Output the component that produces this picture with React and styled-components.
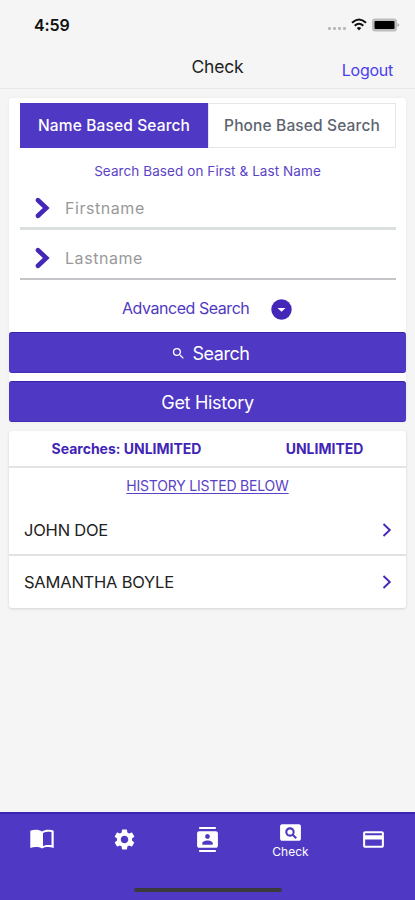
import React from "react";
import styled, { createGlobalStyle } from "styled-components";
import { MdContacts, MdCreditCard, MdPageview, MdSearch, MdSettings } from "react-icons/md";

const purple = "#4f38c3";
const ink = "#4527b8";

const GlobalStyle = createGlobalStyle`
  * {
    box-sizing: border-box;
  }

  body {
    background: #f5f5f5;
    font-family: Inter, "Liberation Sans", sans-serif;
    margin: 0;
  }

  button,
  input {
    font-family: inherit;
  }
`;

const Screen = styled.div`
  display: flex;
  flex-direction: column;
  height: 900px;
  overflow: hidden;
  width: 415px;
`;

const StatusBar = styled.div`
  align-items: center;
  display: flex;
  height: 50px;
  justify-content: space-between;
  padding: 0 15px 0 34px;
`;

const Clock = styled.span`
  color: #111;
  font-size: 16px;
  font-weight: 600;
  letter-spacing: -0.1px;
`;

const Header = styled.header`
  border-bottom: 1px solid #e8e8e8;
  display: grid;
  grid-template-columns: 1fr auto 1fr;
  height: 39px;
  padding: 0 22px 0 42px;
`;

const Title = styled.h1`
  color: #222;
  font-size: 17.5px;
  font-weight: 400;
  grid-column: 2;
  letter-spacing: -0.2px;
  line-height: 33px;
  margin: 0;
`;

const Logout = styled.a`
  color: #4b3df0;
  font-size: 16px;
  justify-self: end;
  letter-spacing: -0.25px;
  line-height: 40px;
`;

const Content = styled.main`
  display: flex;
  flex: 1;
  flex-direction: column;
  gap: 9px;
  padding: 9px 9px 0;
`;

const Card = styled.section`
  background: #fff;
  border-radius: 3px;
  box-shadow: 0 1px 3px rgba(0, 0, 0, 0.14);
`;

const SearchCard = styled(Card)`
  box-shadow: 0 0 3px rgba(0, 0, 0, 0.06);
  display: flex;
  flex-direction: column;
  height: 324px;
`;

const Segment = styled.div`
  display: grid;
  grid-template-columns: 188px 188px;
  margin: 5px 11px 0;
`;

const SegmentButton = styled.button`
  background: ${({ active }) => (active ? purple : "#fff")};
  border: 1px solid ${({ active }) => (active ? purple : "#e6e6e8")};
  color: ${({ active }) => (active ? "#fff" : "#5d6470")};
  font-size: 15.5px;
  font-weight: 500;
  height: 45px;
  letter-spacing: 0.14px;
  padding: 0;
  white-space: nowrap;
`;

const Caption = styled.p`
  color: #5a43c6;
  font-size: 13.5px;
  letter-spacing: 0.08px;
  line-height: 20px;
  margin: 13px 0 0;
  text-align: center;
`;

const Field = styled.label`
  align-items: center;
  border-bottom: ${({ line }) => line};
  display: flex;
  gap: 15px;
  height: 50px;
  margin: 0 10px 0 11px;
  padding: 8px 0 0 15px;
`;

const FirstField = styled(Field)`
  height: 49px;
`;

const Input = styled.input`
  background: none;
  border: 0;
  flex: 1;
  font-size: 16px;
  letter-spacing: 0.55px;
  outline: 0;
  padding: 0;

  &::placeholder {
    color: #999;
    opacity: 1;
  }
`;

const Advanced = styled.div`
  align-items: center;
  color: #5039c2;
  display: flex;
  flex: 1;
  font-size: 16px;
  gap: 22px;
  letter-spacing: -0.45px;
  padding: 7px 0 0 113px;
`;

const AdvancedLabel = styled.span`
  padding-bottom: 3px;
`;

const Buttons = styled.div`
  display: flex;
  flex-direction: column;
  gap: 8px;
`;

const Button = styled.button`
  align-items: center;
  background: ${purple};
  border: 0;
  border-bottom: 1px solid #452bb6;
  border-radius: 3px;
  border-top: 1px solid #3c20ac;
  color: #fff;
  display: flex;
  font-size: 18px;
  gap: 6px;
  height: 41px;
  justify-content: center;
  letter-spacing: -0.3px;
  padding: 1px 0 0;
`;

const SearchButton = styled(Button)`
  letter-spacing: -0.45px;
  padding-left: 6px;
`;

const Quota = styled.div`
  border-bottom: 2px solid #e4e4e4;
  color: #4125b6;
  display: grid;
  font-size: 14px;
  font-weight: 700;
  grid-template-columns: 235px 1fr;
  height: 37px;
  line-height: 36px;
  padding-right: 1px;
  text-align: center;
`;

const ListTitle = styled.h2`
  color: #5942c7;
  font-size: 14px;
  font-weight: 400;
  letter-spacing: -0.2px;
  line-height: 35px;
  margin: 0;
  text-align: center;
  text-decoration: underline;
  text-decoration-thickness: 1px;
  text-underline-offset: 2px;
`;

const Person = styled.div`
  align-items: center;
  color: #222;
  display: flex;
  font-size: 16.5px;
  height: 51px;
  justify-content: space-between;
  letter-spacing: -0.22px;
  padding: 2px 14px 0 15px;

  & + & {
    border-top: 2px solid #e2e2e2;
    height: 54px;
    padding-top: 0;
  }
`;

const TabBar = styled.nav`
  background: ${purple};
  border-top: 2px solid #3d24ad;
  display: flex;
  flex-direction: column;
  height: 88px;
  justify-content: space-between;
`;

const Tabs = styled.div`
  display: grid;
  grid-template-columns: repeat(5, 83px);
  height: 50px;
`;

const Tab = styled.a`
  align-items: center;
  color: #fff;
  display: flex;
  flex-direction: column;
  font-size: 12px;
  justify-content: center;
  line-height: 14px;
`;

const HomeIndicator = styled.div`
  align-self: center;
  background: #3a393c;
  border-radius: 3px;
  height: 4px;
  margin-bottom: 8px;
  width: 148px;
`;

function StatusIcons() {
  return (
    <svg width="74" height="16" viewBox="0 0 74 16">
      <g fill="#b9b9b9">
        <rect x="2" y="10" width="3" height="3" rx="1" />
        <rect x="7" y="10" width="3" height="3" rx="1" />
        <rect x="12" y="10" width="3" height="3" rx="1" />
        <rect x="17" y="10" width="3" height="3" rx="1" />
      </g>
      <g fill="none" stroke="#111" strokeWidth="2.1">
        <path d="M26 5.8Q33 -0.8 40 5.8" />
        <path d="M28.7 8.7Q33 4.8 37.3 8.7" />
      </g>
      <path d="M30.7 11Q33 9 35.3 11L33 13.5Z" fill="#111" />
      <rect x="46" y="1.5" width="25" height="13" rx="3" fill="#bdbdbd" />
      <rect x="48.5" y="4" width="20" height="8" rx="1" fill="#000" />
      <path d="M71.5 6Q75 8 71.5 10Z" fill="#aaa" />
    </svg>
  );
}

function FieldArrow() {
  return (
    <svg width="15" height="22" viewBox="0 0 15 22">
      <path d="M3 3.200L11.300 11L3 18.800" fill="none" stroke={ink} strokeWidth="4.600" strokeLinecap="round" />
    </svg>
  );
}

function DropIcon() {
  return (
    <svg width="21" height="21" viewBox="0 0 21 21">
      <circle cx="10.5" cy="10.5" r="10.2" fill={ink} />
      <path d="M6.5 9H14.5L10.5 12.8Z" fill="#fff" />
    </svg>
  );
}

function RowArrow() {
  return (
    <svg width="10" height="16" viewBox="0 0 10 16">
      <path d="M1.5 2L7.8 8L1.5 14" fill="none" stroke={ink} strokeWidth="1.9" />
    </svg>
  );
}

function BookIcon() {
  return (
    <svg width="26" height="24" viewBox="0 0 26 24">
      <path
        d="M13 4.500C11.300 3.300 9 2.800 6.800 2.800C4.900 2.800 2.900 3.100 1.300 3.800V21C3 20.400 4.900 20.100 6.800 20.100C9 20.100 11.300 20.500 13 21.600C14.700 20.500 17 20.100 19.200 20.100C21.100 20.100 23 20.400 24.700 21V3.800C23.100 3.100 21.100 2.800 19.200 2.800C17 2.800 14.700 3.300 13 4.500ZM22.500 18.200C18.500 17.600 16 18.100 14 19V6C16.500 4.800 19.500 4.500 22.500 5.200Z"
        fill="#fff"
        fillRule="evenodd"
      />
    </svg>
  );
}

const people = ["JOHN DOE", "SAMANTHA BOYLE"];

function App() {
  return (
    <Screen>
      <GlobalStyle />
      <StatusBar>
        <Clock>4:59</Clock>
        <StatusIcons />
      </StatusBar>
      <Header>
        <Title>Check</Title>
        <Logout>Logout</Logout>
      </Header>
      <Content>
        <SearchCard>
          <Segment>
            <SegmentButton active>Name Based Search</SegmentButton>
            <SegmentButton>Phone Based Search</SegmentButton>
          </Segment>
          <Caption>Search Based on First &amp; Last Name</Caption>
          <FirstField line="3px solid #dbdfe0">
            <FieldArrow />
            <Input placeholder="Firstname" />
          </FirstField>
          <Field line="2px solid #c3c5c8">
            <FieldArrow />
            <Input placeholder="Lastname" />
          </Field>
          <Advanced>
            <AdvancedLabel>Advanced Search</AdvancedLabel>
            <DropIcon />
          </Advanced>
          <Buttons>
            <SearchButton>
              <MdSearch size={15} />
              Search
            </SearchButton>
            <Button>Get History</Button>
          </Buttons>
        </SearchCard>
        <Card>
          <Quota>
            <span>Searches: UNLIMITED</span>
            <span>UNLIMITED</span>
          </Quota>
          <ListTitle>HISTORY LISTED BELOW</ListTitle>
          {people.map(name => (
            <Person key={name}>
              {name}
              <RowArrow />
            </Person>
          ))}
        </Card>
      </Content>
      <TabBar>
        <Tabs>
          <Tab>
            <BookIcon />
          </Tab>
          <Tab>
            <MdSettings size={25} />
          </Tab>
          <Tab>
            <MdContacts size={25} />
          </Tab>
          <Tab>
            <MdPageview size={25} />
            Check
          </Tab>
          <Tab>
            <MdCreditCard size={25} />
          </Tab>
        </Tabs>
        <HomeIndicator />
      </TabBar>
    </Screen>
  );
}

export default App;
